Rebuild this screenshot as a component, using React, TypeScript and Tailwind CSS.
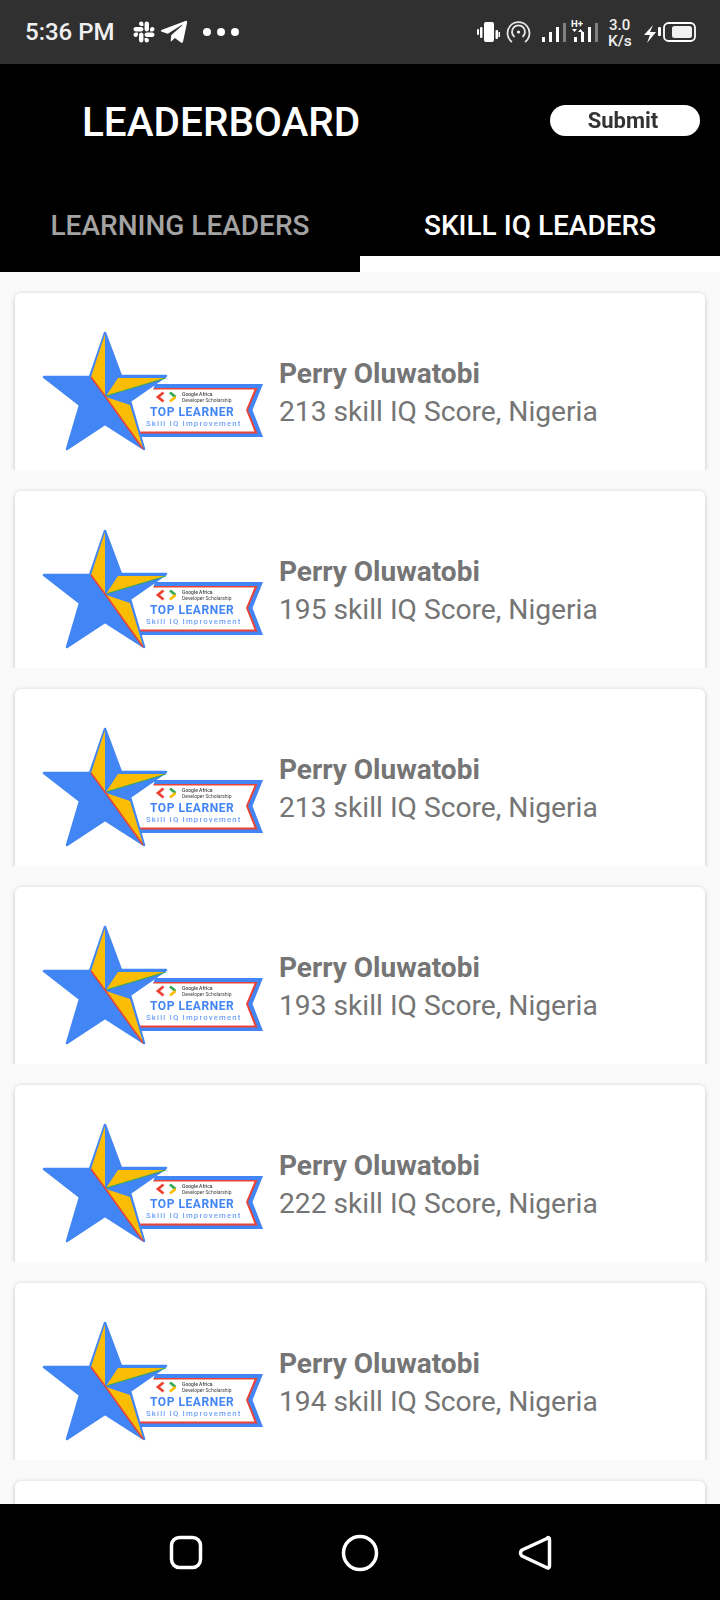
import { FaSlack, FaTelegramPlane } from 'react-icons/fa'

const scores = [213, 195, 213, 193, 222, 194]

function Badge() {
  return (
    <svg width="260" height="190" viewBox="0 0 260 190" className="shrink-0 blur-[0.4px]">
      {/* ribbon */}
      <path d="M135 74H243L232.500 100L243 127H118Z" fill="#4285f4" />
      <path d="M134 78H237.500L228 100L237.500 123.500H118Z" fill="#ea4335" />
      <path d="M130 79.500H234.500L226 100L234.500 121.500H115Z" fill="#fff" />
      {/* star */}
      <path
        d="M85 23L101 66H146L110 91L124 139L85 114L47 139L60 95L24 67H70Z"
        fill="#4285f4"
        stroke="#4285f4"
        strokeWidth="2.500"
        strokeLinejoin="round"
      />
      <path d="M85 24V86L71 67Z" fill="#fbbc04" />
      <path d="M98 68H146L86 86Z" fill="#fbbc04" />
      <path d="M86 87L110 95L123 138Z" fill="#fbbc04" />
      <path d="M71 67L85 86L123 139" fill="none" stroke="#ea4335" strokeWidth="1.500" />
      <path d="M86 86L146 68" fill="none" stroke="#34a853" strokeWidth="1" />
      {/* dev scholarship mark */}
      <path d="M143.500 82.500L138 87L143.500 91.500" fill="none" stroke="#ea4335" strokeWidth="2.800" />
      <path d="M150 82.500L155.500 87" fill="none" stroke="#34a853" strokeWidth="2.800" />
      <path d="M155.500 87L150 91.500" fill="none" stroke="#fbbc04" strokeWidth="2.800" />
      <text x="162" y="86" fontFamily="Roboto" fontSize="5" fontWeight="500" fill="#444">
        Google Africa
      </text>
      <text x="162" y="92" fontFamily="Roboto" fontSize="5" fill="#444">
        Developer Scholarship
      </text>
      <text x="130" y="105.500" fontFamily="Roboto" fontSize="12" fontWeight="700" fill="#4285f4" letterSpacing="0.550">
        TOP LEARNER
      </text>
      <text x="126" y="115.500" fontFamily="Roboto" fontSize="7.800" fontWeight="500" fill="#6fa2f7" letterSpacing="1.150">
        Skill IQ Improvement
      </text>
    </svg>
  )
}

function LeaderRow({ score }: { score: number }) {
  return (
    <div className="h-[198px] overflow-hidden px-[15px] pt-[21px]">
      <div className="flex h-[200px] items-start rounded-[6px] bg-white pl-[5px] pt-[17px] shadow-[0_1px_5px_rgba(0,0,0,0.22)]">
        <Badge />
        <div className="ml-[-1px] pt-[45px] text-[#757575]">
          <p className="text-[28px] leading-[38px] font-bold">Perry Oluwatobi</p>
          <p className="text-[28.200px] leading-[37px]">{score} skill IQ Score, Nigeria</p>
        </div>
      </div>
    </div>
  )
}

function StatusIcons() {
  return (
    <svg width="240" height="48" viewBox="0 -4 240 48">
      {/* vibrate */}
      <g fill="#fff">
        <rect x="17" y="9" width="2" height="6" rx="1" />
        <rect x="20" y="7" width="2.500" height="11" rx="1" />
        <rect x="24" y="2" width="10" height="20" rx="2" />
        <rect x="35.500" y="10" width="2.500" height="9" rx="1" />
        <rect x="38.500" y="12" width="1.500" height="5" />
      </g>
      {/* hotspot */}
      <g fill="none" stroke="#e8e8e8" strokeWidth="1.800">
        <path d="M52 22A11 11 0 1 1 65 22" />
        <path d="M54.500 17A6.500 6.500 0 1 1 62.500 17" />
      </g>
      <circle cx="58.500" cy="12" r="1.500" fill="#fff" />
      {/* signal bars */}
      <g fill="#fff">
        <rect x="82" y="17" width="3" height="5" />
        <rect x="89" y="12" width="3" height="10" />
        <rect x="96" y="7" width="3" height="15" />
        <rect x="103" y="3" width="3" height="19" fill="#808080" />
        <rect x="114" y="17" width="3" height="5" />
        <rect x="121" y="12" width="3" height="10" />
        <rect x="128" y="7" width="3" height="15" />
        <rect x="135" y="3" width="3" height="19" fill="#808080" />
        <path d="M112 9h5l-2.500 3zM118 12h5l-2.500-3z" />
      </g>
      <text x="111" y="7" fontFamily="Roboto" fontSize="9.500" fontWeight="700" fill="#fff">H+</text>
      <text x="149" y="10" fontFamily="Roboto" fontSize="15" fontWeight="500" fill="#f0f0f0">3.0</text>
      <text x="148" y="26" fontFamily="Roboto" fontSize="15.500" fontWeight="500" fill="#f0f0f0">K/s</text>
      {/* charging battery */}
      <path d="M193 5L184 15H190L187 23L196 12H190Z" fill="#fff" />
      <rect x="198" y="7" width="3" height="9" rx="1" fill="#fff" />
      <rect x="204" y="3" width="31" height="18" rx="4.500" fill="none" stroke="#fff" strokeWidth="1.800" />
      <rect x="212" y="6" width="20" height="12" rx="2.500" fill="#f0f0f0" />
    </svg>
  )
}

export default function App() {
  return (
    <div className="relative h-[1600px] w-[720px] overflow-hidden bg-[#fafafa] font-[Roboto]">
      <div className="flex h-[64px] items-center justify-between bg-[#303030] pl-[25px] pr-[20px] text-white">
        <div className="flex items-center">
          <span className="text-[24px] leading-none font-medium text-[#f0f0f0]">5:36 PM</span>
          <FaSlack className="ml-[17px] text-[24px]" />
          <FaTelegramPlane className="ml-[3px] text-[30px]" />
          <div className="ml-[14px] flex gap-[6px]">
            <span className="h-[8px] w-[8px] rounded-full bg-white" />
            <span className="h-[8px] w-[8px] rounded-full bg-white" />
            <span className="h-[8px] w-[8px] rounded-full bg-white" />
          </div>
        </div>
        <div className="pt-[16px]">
          <StatusIcons />
        </div>
      </div>

      <div className="flex h-[112px] items-center justify-between bg-black pl-[82px] pr-[20px]">
        <h1 className="mt-[5px] text-[40.500px] leading-none font-medium text-white">LEADERBOARD</h1>
        <button className="mb-[-1px] h-[31px] w-[150px] rounded-full bg-white pr-[4px] text-[22px] leading-none font-bold text-[#333] blur-[0.5px]">
          Submit
        </button>
      </div>

      <div className="grid h-[96px] grid-cols-2">
        <div className="bg-black pt-[33px] text-center text-[28px] leading-[34px] font-medium text-[#a3a3a3]">
          LEARNING LEADERS
        </div>
        <div className="border-b-[16px] border-white bg-black pt-[33px] text-center text-[28px] leading-[34px] font-medium text-white">
          SKILL IQ LEADERS
        </div>
      </div>

      <div>
        {scores.map((score, i) => (
          <LeaderRow key={i} score={score} />
        ))}
        <div className="h-[198px] overflow-hidden px-[15px] pt-[21px]">
          <div className="h-[200px] rounded-[6px] bg-white shadow-[0_1px_5px_rgba(0,0,0,0.22)]" />
        </div>
      </div>

      <div className="absolute inset-x-0 bottom-0 flex h-[96px] items-center bg-black">
        <svg width="720" height="96" viewBox="0 0 720 96">
          <rect x="171.500" y="33.500" width="29" height="30" rx="8" fill="none" stroke="#fff" strokeWidth="3.500" />
          <circle cx="360" cy="49" r="16.500" fill="none" stroke="#fff" strokeWidth="3.500" />
          <path
            d="M547 34.500C548 33 549.500 33.500 549.500 35.500V62C549.500 64 548 64.500 546.500 63.500L522 52C520 50.500 520 47.500 522 46Z"
            fill="none"
            stroke="#fff"
            strokeWidth="3.500"
            strokeLinejoin="round"
          />
        </svg>
      </div>
    </div>
  )
}
